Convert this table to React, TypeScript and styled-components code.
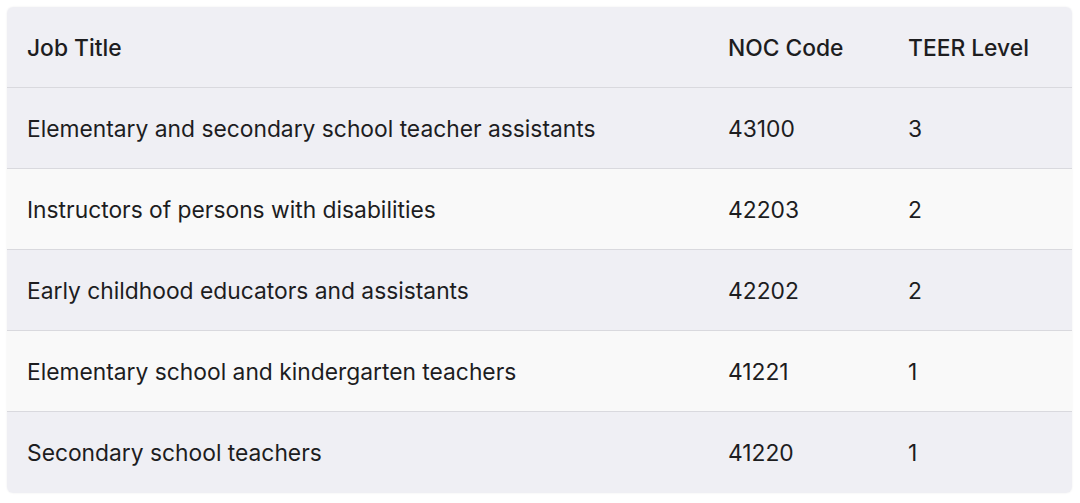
import React from 'react';
import styled, { createGlobalStyle } from 'styled-components';

const GlobalStyle = createGlobalStyle`
  body {
    margin: 0;
    background: #ffffff;
    font-family: Inter, "Noto Sans", sans-serif;
  }
`;

const Page = styled.div`
  padding: 7px 8px 10px 7px;
`;

const Table = styled.table`
  width: 100%;
  border-collapse: separate;
  border-spacing: 0;
  border-radius: 6px;
  overflow: hidden;
  box-shadow: 0 0 2px rgba(0, 0, 0, 0.08);
  color: #1d1d1f;
  font-size: 22.8px;
`;

const Row = styled.tr<{ $shade: boolean }>`
  background: ${(p) => (p.$shade ? '#efeff4' : '#f9f9f9')};
`;

const Cell = styled.td<{ $last?: boolean; $w?: number }>`
  height: 81px;
  padding: 0 0 0 20px;
  box-sizing: border-box;
  vertical-align: middle;
  text-align: left;
  font-weight: 400;
  border-bottom: ${(p) => (p.$last ? 'none' : '1px solid #d9d9de')};
  width: ${(p) => (p.$w ? `${p.$w}px` : 'auto')};
`;

const HeadCell = styled(Cell).attrs({ as: 'th' })`
  font-weight: 500;
`;

const jobs = [
  { title: 'Elementary and secondary school teacher assistants', noc: '43100', teer: '3' },
  { title: 'Instructors of persons with disabilities', noc: '42203', teer: '2' },
  { title: 'Early childhood educators and assistants', noc: '42202', teer: '2' },
  { title: 'Elementary school and kindergarten teachers', noc: '41221', teer: '1' },
  { title: 'Secondary school teachers', noc: '41220', teer: '1' },
];

const App = () => {
  return (
    <>
      <GlobalStyle />
      <Page>
        <Table>
          <thead>
            <Row $shade>
              <HeadCell $w={701}>Job Title</HeadCell>
              <HeadCell $w={180}>NOC Code</HeadCell>
              <HeadCell>TEER Level</HeadCell>
            </Row>
          </thead>
          <tbody>
            {jobs.map((job, i) => {
              const last = i === jobs.length - 1;
              return (
                <Row key={job.noc + i} $shade={i % 2 === 0}>
                  <Cell $last={last}>{job.title}</Cell>
                  <Cell $last={last}>{job.noc}</Cell>
                  <Cell $last={last}>{job.teer}</Cell>
                </Row>
              );
            })}
          </tbody>
        </Table>
      </Page>
    </>
  );
};

export default App;
